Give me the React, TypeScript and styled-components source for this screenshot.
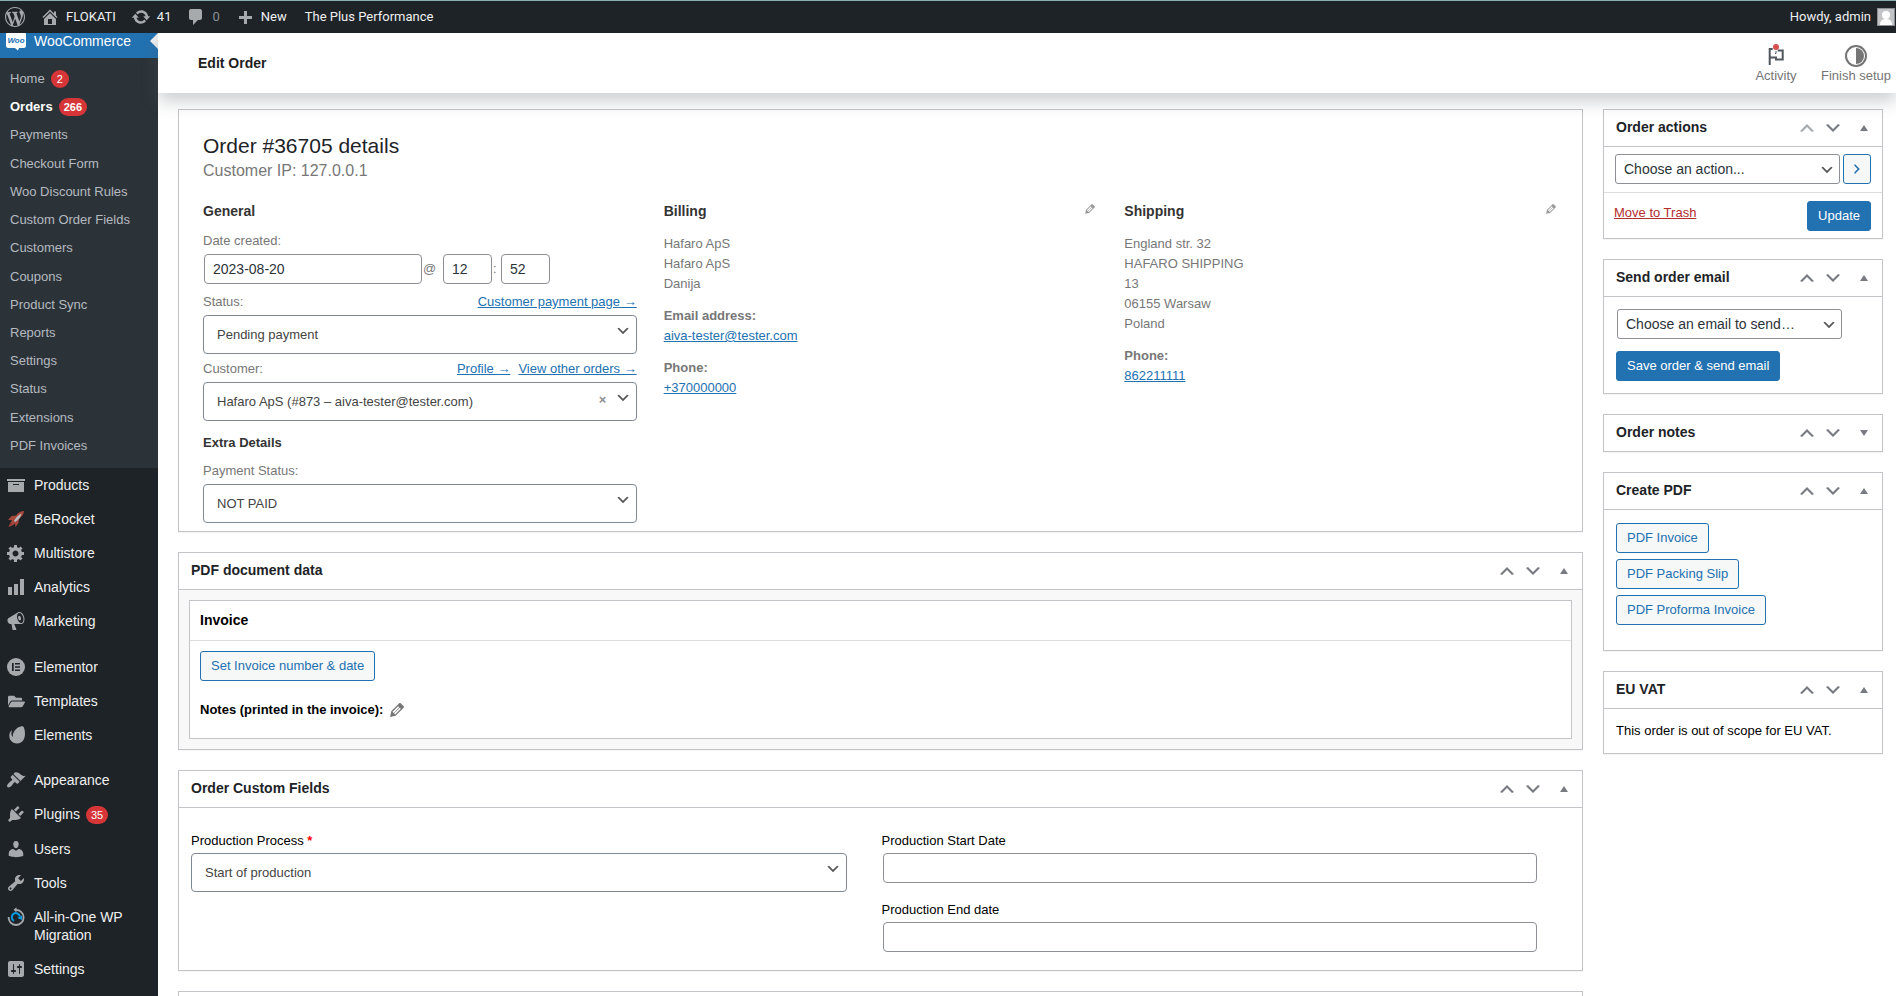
import React from 'react';
import styled, { createGlobalStyle, css } from 'styled-components';
import { FaFolderOpen } from 'react-icons/fa';

const GlobalStyle = createGlobalStyle`
  *, *::before, *::after { box-sizing: border-box; }
  html, body { margin: 0; padding: 0; }
  body {
    background: #fff;
    color: #3c434a;
    font-family: 'Liberation Sans', Arial, sans-serif;
    font-size: 13px;
    line-height: 20px;
  }
  h1, h2, h3, p, ul, address { margin: 0; padding: 0; font-style: normal; }
  ul { list-style: none; }
  button, input, select { font-family: inherit; }
`;

/* ---------- icons ---------- */

const ICONS = {
  wordpress:
    'M20 10c0-5.51-4.49-10-10-10C4.48 0 0 4.49 0 10c0 5.52 4.48 10 10 10 5.51 0 10-4.48 10-10zM7.78 15.37L4.37 6.22c.55-.02 1.17-.08 1.17-.08.5-.06.44-1.13-.06-1.11 0 0-1.45.11-2.37.11-.18 0-.37 0-.58-.01C4.12 2.69 6.87 1.11 10 1.11c2.33 0 4.45.87 6.05 2.34-.68-.11-1.65.39-1.65 1.58 0 .74.45 1.36.9 2.1.35.61.55 1.36.55 2.46 0 1.49-1.4 5-1.4 5l-3.03-8.37c.54-.02.82-.17.82-.17.5-.05.44-1.25-.06-1.22 0 0-1.44.12-2.38.12-.87 0-2.33-.12-2.33-.12-.5-.03-.56 1.2-.06 1.22l.92.08 1.26 3.41zM17.41 10c.24-.64.74-1.87.43-4.25.7 1.29 1.05 2.71 1.05 4.25 0 3.29-1.73 6.24-4.4 7.78.97-2.59 1.94-5.2 2.92-7.78zM6.1 18.09C3.12 16.65 1.11 13.53 1.11 10c0-1.3.23-2.48.72-3.59C3.25 10.3 4.67 14.2 6.1 18.09zm4.03-6.63l2.58 6.98c-.86.29-1.76.45-2.71.45-.79 0-1.57-.11-2.29-.33.81-2.38 1.62-4.74 2.42-7.1z',
  home: 'M16 8.5l1.53 1.53-1.06 1.06L10 4.6l-6.47 6.49-1.06-1.06L10 2.5l4 4v-2h2v4zm-6-2.46l6 5.99V18H4v-5.97zM12 17v-5H8v5h4z',
  update:
    'M10.2 3.28c3.53 0 6.43 2.61 6.92 6h2.08l-3.5 4-3.5-4h2.32c-.45-1.97-2.21-3.45-4.32-3.45-1.45 0-2.73.71-3.54 1.78L4.95 5.66C6.23 4.2 8.11 3.28 10.2 3.28zm-.4 13.44c-3.52 0-6.43-2.61-6.92-6H.8l3.5-4c1.17 1.33 2.33 2.67 3.5 4H5.48c.45 1.97 2.21 3.45 4.32 3.45 1.45 0 2.73-.71 3.54-1.78l1.71 1.95c-1.28 1.46-3.15 2.38-5.25 2.38z',
  comment: 'M5 2h9c1.1 0 2 .9 2 2v7c0 1.1-.9 2-2 2h-2l-5 5v-5H5c-1.1 0-2-.9-2-2V4c0-1.1.9-2 2-2z',
  plus: 'M17 9v3h-5v5H9v-5H4V9h5V4h3v5h5z',
  archive: 'M19 4v2H1V4h18zM2 7h16v10H2V7zm11 3V9H7v1h6z',
  gear: 'M18 12h-2.18c-.17.7-.44 1.35-.81 1.93l1.54 1.54-2.1 2.1-1.54-1.54c-.58.36-1.23.63-1.91.79V19H8v-2.18c-.68-.16-1.33-.43-1.91-.79l-1.54 1.54-2.12-2.12 1.54-1.54c-.36-.58-.63-1.23-.79-1.91H1V9.03h2.17c.16-.7.44-1.35.8-1.94L2.43 5.55l2.1-2.1 1.54 1.54c.58-.37 1.24-.64 1.93-.81V2h3v2.18c.68.16 1.33.43 1.91.79l1.54-1.54 2.12 2.12-1.54 1.54c.36.59.64 1.24.8 1.94H18V12zm-8.5 1.5c1.66 0 3-1.34 3-3s-1.34-3-3-3-3 1.34-3 3 1.34 3 3 3z',
  chart: 'M18 18V2h-4v16h4zm-6 0V7H8v11h4zm-6 0v-8H2v8h4z',
  megaphone:
    'M18.15 5.94c.46 1.62.38 3.22-.02 4.48-.42 1.28-1.26 2.18-2.3 2.48-.16.06-.26.06-.4.06-.06.02-.12.02-.18.02-.06.02-.14.02-.22.02h-6.8l2.22 5.5c.02.14-.06.26-.14.34-.08.1-.24.16-.34.16H6.95c-.1 0-.26-.06-.34-.16-.08-.08-.16-.2-.14-.34l-1-5.5H4.25l-.02-.02c-.5.06-1.08-.18-1.54-.62s-.88-1.08-1.06-1.88c-.24-.8-.2-1.56-.02-2.2.18-.62.58-1.08 1.06-1.3l.02-.02 9-5.4c.1-.06.18-.1.24-.16.06-.04.14-.08.24-.12.16-.08.28-.12.5-.18 1.04-.3 2.24.1 3.22.98s1.84 2.24 2.26 3.86zm-2.58 5.98h-.02c.4-.1.74-.34 1.04-.7.58-.7.86-1.76.86-3.04 0-.64-.1-1.3-.28-1.98-.34-1.36-1.02-2.5-1.78-3.24s-1.68-1.1-2.46-.88c-.82.22-1.4.96-1.7 2-.32 1.04-.28 2.36.06 3.72.38 1.36 1 2.5 1.8 3.24.78.74 1.62 1.1 2.48.88zm-2.54-7.08c.22-.04.42-.02.62.04.38.16.76.48 1.02 1s.42 1.2.42 1.78c0 .3-.04.56-.12.8-.18.48-.44.84-.86.94-.34.1-.8-.06-1.14-.4s-.64-.86-.78-1.5c-.18-.62-.12-1.24.02-1.72s.48-.84.82-.94z',
  appearance:
    'M14.48 11.06L7.41 3.99l1.5-1.5c.5-.56 2.3-.47 3.51.32 1.21.8 1.43 1.28 2.91 2.1 1.18.64 2.45 1.26 4.45.85zm-.71.71L6.7 4.7 4.93 6.47c-.39.39-.39 1.02 0 1.41l1.06 1.06c.39.39.39 1.03 0 1.42-.6.6-1.43 1.11-2.21 1.69-.35.26-.7.53-1.01.84C1.43 14.23.4 16.08 1.4 17.07c.99 1 2.84-.03 4.18-1.36.31-.31.58-.66.85-1.02.57-.78 1.08-1.61 1.69-2.21.39-.39 1.02-.39 1.41 0l1.06 1.06c.39.39 1.02.39 1.41 0z',
  plugins:
    'M13.11 4.36L9.87 7.6 8 5.73l3.24-3.24c.35-.34 1.05-.2 1.56.32.52.51.66 1.21.31 1.55zm-8 1.77l.91-1.12 9.01 9.01-1.19.84c-.71.71-2.63 1.16-3.82 1.16H6.14L4.9 17.26c-.59.59-1.54.59-2.12 0-.59-.58-.59-1.53 0-2.12l1.24-1.24v-3.88c0-1.13.4-3.19 1.09-3.89zm7.26 3.97l3.24-3.24c.34-.35 1.04-.21 1.55.31.52.51.66 1.21.31 1.55l-3.24 3.25z',
  users:
    'M10 9.25c-2.27 0-2.73-3.44-2.73-3.44C7 4.02 7.82 2 9.97 2c2.16 0 2.98 2.02 2.71 3.81 0 0-.41 3.44-2.68 3.44zm0 2.57L12.72 10c2.39 0 4.52 2.33 4.52 4.53v2.49s-3.65 1.13-7.24 1.13c-3.65 0-7.24-1.13-7.24-1.13v-2.49c0-2.25 1.94-4.48 4.47-4.48z',
  tools:
    'M16.68 9.77c-1.34 1.34-3.3 1.67-4.95.99l-5.41 6.52c-.99.99-2.59.99-3.58 0s-.99-2.59 0-3.57l6.52-5.42c-.68-1.65-.35-3.61.99-4.95 1.28-1.28 3.12-1.62 4.72-1.06l-2.89 2.89 2.82 2.82 2.86-2.87c.53 1.58.18 3.39-1.08 4.65zM3.81 16.21c.4.39 1.04.39 1.43 0 .4-.4.4-1.04 0-1.43-.39-.4-1.03-.4-1.43 0-.39.39-.39 1.03 0 1.43z',
  sliders:
    'M18 16V4c0-1.1-.9-2-2-2H4c-1.1 0-2 .9-2 2v12c0 1.1.9 2 2 2h12c1.1 0 2-.9 2-2zM8 11h1c.55 0 1 .45 1 1s-.45 1-1 1H8v1.5c0 .28-.22.5-.5.5s-.5-.22-.5-.5V13H6c-.55 0-1-.45-1-1s.45-1 1-1h1V5.5c0-.28.22-.5.5-.5s.5.22.5.5V11zm5-2h-1c-.55 0-1-.45-1-1s.45-1 1-1h1V5.5c0-.28.22-.5.5-.5s.5.22.5.5V7h1c.55 0 1 .45 1 1s-.45 1-1 1h-1v5.5c0 .28-.22.5-.5.5s-.5-.22-.5-.5V9z',
  up: 'M15 14l-5-5-5 5-2-1 7-7 7 7z',
  down: 'M5 6l5 5 5-5 2 1-7 7-7-7z',
  right: 'M6 15l5-5-5-5 1-2 7 7-7 7z',
  triangleUp: 'M6 13l4-6 4 6z',
  triangleDown: 'M6 7h8l-4 6z',
  pencil:
    'M13.89 3.39l2.71 2.72c.46.46.42 1.24.03 1.64l-8.01 8.02-5.56 1.16 1.16-5.58s7.6-7.63 7.99-8.03c.39-.39 1.22-.39 1.68.07zm-2.73 2.79l-5.59 5.61 1.11 1.11 5.54-5.65zm-2.97 8.23l5.58-5.6-1.07-1.08-5.59 5.6z',
};

type IconName = keyof typeof ICONS;

const Glyph = ({ name, size = 20 }: { name: IconName; size?: number }) => (
  <svg width={size} height={size} viewBox="0 0 20 20" fill="currentColor" aria-hidden="true">
    <path d={ICONS[name]} />
  </svg>
);

const RocketIcon = () => (
  <svg width="20" height="20" viewBox="0 0 20 20" aria-hidden="true">
    <path d="M18 2c-3 0-6 1.500-8 4.500L5.500 7 2 11l4 .2L4.500 14 3 18l4-2 2-1.500.5 3.500 3-4 .5-4c3-2.500 5-5 5-8z" fill="#a8473c" />
    <path d="M15.500 4.500c-3 1.200-6 4.500-7.500 7.500l1 1c3-1.500 6-5 6.500-8.500z" fill="#b9bcbf" />
    <path d="M2 18l2.500-4.500L6.500 15z" fill="#8d3a31" />
  </svg>
);

const ElementorIcon = () => (
  <svg width="20" height="20" viewBox="0 0 20 20" aria-hidden="true">
    <circle cx="10" cy="10" r="9" fill="#a7aaad" />
    <path d="M6 6h1.700v8H6zM9 6h5v1.600H9zM9 9.200h5v1.600H9zM9 12.400h5V14H9z" fill="#1d2327" />
  </svg>
);

const LeafIcon = () => (
  <svg width="20" height="20" viewBox="-3 -1 27 27" fill="#a7aaad" aria-hidden="true">
    <path d="M20.058 1.043C16.744-.841 6.018 4.682 6.104 14.38a.459.459 0 0 1-.45.451.463.463 0 0 1-.388-.221 10.387 10.387 0 0 1-.412-7.634.42.42 0 0 0-.712-.412 10.284 10.284 0 0 0-2.784 7.033A10.284 10.284 0 0 0 11.760 24c14.635-.332 11.257-21.247 8.298-22.957z" />
  </svg>
);

const MigrationIcon = () => (
  <svg width="20" height="20" viewBox="0 0 20 20" fill="none" aria-hidden="true">
    <path d="M9.500 3a7.500 7.500 0 1 1-6.900 7" stroke="#a7aaad" strokeWidth="1.800" />
    <path d="M10.500.2v5.400L7.500 2.800z" fill="#a7aaad" />
    <path d="M8 13.900A4.100 4.100 0 1 1 13.900 9.600" stroke="#0a9be0" strokeWidth="2" />
    <path d="M16 8.500v4.500l-4.800-2z" fill="#0a9be0" />
  </svg>
);

const WooIcon = () => (
  <svg width="20" height="20" viewBox="0 0 20 20" aria-hidden="true">
    <path d="M2.500 1h15A2.500 2.500 0 0 1 20 3.500v11a2.500 2.500 0 0 1-2.500 2.500H13l-1 2.500L9 17H2.500A2.500 2.500 0 0 1 0 14.500v-11A2.500 2.500 0 0 1 2.500 1z" fill="#fff" />
    <text x="10" y="12" textAnchor="middle" fontFamily="Liberation Sans, Arial, sans-serif" fontSize="8" fontWeight="700" fontStyle="italic" fill="#2271b1">
      Woo
    </text>
  </svg>
);

const FlagIcon = () => (
  <svg width="24" height="24" viewBox="0 0 24 24" fill="none" stroke="#50575e" strokeWidth="2" aria-hidden="true">
    <path d="M5.700 21V4" />
    <path d="M5.700 5h3M5.700 13.500h6.300v2h6.700V6.500h-5" />
    <path d="M12 7v2.500h-1" strokeWidth="1" />
    <circle cx="12" cy="3" r="3" fill="#d94f4f" stroke="none" />
  </svg>
);

const HalfCircleIcon = () => (
  <svg width="24" height="24" viewBox="0 0 24 24" aria-hidden="true">
    <circle cx="12" cy="12" r="10" fill="none" stroke="#757575" strokeWidth="2" />
    <path d="M12 4a8 8 0 0 1 0 16z" fill="#757575" />
  </svg>
);

const AvatarIcon = () => (
  <svg width="18" height="18" viewBox="0 0 18 18" aria-hidden="true">
    <rect width="18" height="18" fill="#8c8f94" />
    <rect x="1" y="1" width="16" height="16" fill="#c3c4c7" />
    <circle cx="9" cy="7" r="4" fill="#fff" />
    <path d="M3 17c0-4 2-6 6-6s6 2 6 6z" fill="#fff" />
  </svg>
);

/* ---------- shell ---------- */

const Shell = styled.div`
  display: flex;
  flex-direction: column;
  height: 100vh;
  overflow: hidden;
`;

const AdminBar = styled.header`
  position: relative;
  z-index: 3;
  flex: none;
  display: flex;
  align-items: center;
  height: 33px;
  padding: 0 1px 0 5px;
  border-top: 1px solid #86aeb0;
  background: #1d2327;
  font-family: Roboto, sans-serif;
`;

const BarLink = styled.a<{ $muted?: boolean; $end?: boolean; $plain?: boolean }>`
  display: flex;
  align-items: center;
  gap: 6px;
  margin-right: ${(p) => (p.$end ? '0' : '15px')};
  margin-left: ${(p) => (p.$end ? 'auto' : p.$plain ? '3px' : '0')};
  color: ${(p) => (p.$muted ? '#8c8f94' : '#f0f0f1')};
  text-decoration: none;
  white-space: nowrap;
  svg { color: #a7aaad; }
`;

const Columns = styled.div`
  flex: 1;
  display: flex;
  min-height: 0;
`;

const Sidebar = styled.nav`
  flex: none;
  width: 158px;
  overflow: hidden;
  background: #1d2327;
`;

const MenuList = styled.ul`
  margin-top: -9px;
`;

const MenuItem = styled.li<{ $space?: number }>`
  margin-top: ${(p) => p.$space ?? 0}px;
`;

const MenuLink = styled.a<{ $active?: boolean }>`
  position: relative;
  display: flex;
  align-items: flex-start;
  gap: 8px;
  padding: 8px 8px 8px 6px;
  color: ${(p) => (p.$active ? '#fff' : '#f0f0f1')};
  background: ${(p) => (p.$active ? '#2271b1' : 'transparent')};
  font-size: 14px;
  line-height: 18px;
  text-decoration: none;
  ${(p) =>
    p.$active &&
    css`
      &::after {
        content: '';
        position: absolute;
        right: 0;
        top: 9px;
        border: 8px solid transparent;
        border-right-color: #f0f0f1;
        border-left: 0;
      }
    `}
`;

const MenuIcon = styled.span`
  flex: none;
  display: flex;
  align-items: center;
  justify-content: center;
  width: 20px;
  height: 18px;
  color: #a7aaad;
  svg { flex: none; }
`;

const Submenu = styled.ul`
  display: flex;
  flex-direction: column;
  justify-content: space-between;
  min-height: 410px;
  padding: 7px 0 8px;
  background: #2c3338;
`;

const SubLink = styled.a<{ $current?: boolean }>`
  display: flex;
  align-items: center;
  height: 28px;
  padding: 0 10px;
  color: ${(p) => (p.$current ? '#fff' : '#b5bac0')};
  font-weight: ${(p) => (p.$current ? 700 : 400)};
  text-decoration: none;
`;

const Badge = styled.span`
  display: inline-block;
  min-width: 18px;
  height: 18px;
  margin-left: 6px;
  padding: 0 5px;
  border-radius: 9px;
  background: #d63638;
  color: #fff;
  font-size: 11px;
  line-height: 18px;
  text-align: center;
`;

const Page = styled.div`
  flex: 1;
  display: flex;
  flex-direction: column;
  min-width: 0;
`;

const PageHeader = styled.div`
  position: relative;
  z-index: 2;
  flex: none;
  display: flex;
  align-items: center;
  justify-content: space-between;
  height: 60px;
  padding-left: 40px;
  background: #fff;
  box-shadow: 0 8px 16px 0 rgba(85, 93, 102, 0.3);
`;

const PageTitle = styled.h1`
  color: #1e1e1e;
  font-size: 14px;
  line-height: 20px;
`;

const HeaderActions = styled.div`
  display: flex;
`;

const HeaderButton = styled.button`
  display: flex;
  flex-direction: column;
  align-items: center;
  width: 80px;
  height: 60px;
  padding: 11px 0 0;
  border: 0;
  background: none;
  color: #757575;
  font-size: 13px;
  line-height: 16px;
  white-space: nowrap;
`;

const Workspace = styled.main`
  flex: 1;
  display: flex;
  align-items: flex-start;
  gap: 20px;
  min-height: 0;
  padding: 16px 13px 0 20px;
  overflow: auto;
  scrollbar-width: none;
`;

const MainColumn = styled.div`
  flex: 1;
  display: flex;
  flex-direction: column;
  gap: 20px;
  min-width: 0;
`;

const SideColumn = styled.aside`
  flex: none;
  display: flex;
  flex-direction: column;
  gap: 20px;
  width: 280px;
`;

/* ---------- panels ---------- */

const Panel = styled.section`
  border: 1px solid #c3c4c7;
  background: #fff;
  box-shadow: 0 1px 1px rgba(0, 0, 0, 0.04);
`;

const PanelHead = styled.div<{ $closed?: boolean }>`
  display: flex;
  align-items: center;
  height: ${(p) => (p.$closed ? '36px' : '37px')};
  border-bottom: ${(p) => (p.$closed ? '0' : '1px solid #c3c4c7')};
`;

const PanelTitle = styled.h2`
  flex: 1;
  padding: 0 0 2px 12px;
  color: #1d2327;
  font-size: 14px;
  line-height: 20px;
`;

const HeadButton = styled.button<{ $wide?: boolean; $faded?: boolean }>`
  display: flex;
  align-items: center;
  justify-content: center;
  width: ${(p) => (p.$wide ? '36px' : '26px')};
  height: 36px;
  padding: 0;
  border: 0;
  background: none;
  color: ${(p) => (p.$faded ? '#a7aaad' : '#787c82')};
`;

const PanelBody = styled.div<{ $pad: string; $gray?: boolean }>`
  padding: ${(p) => p.$pad};
  background: ${(p) => (p.$gray ? '#f8f8f8' : '#fff')};
`;

const PostBox = ({
  title,
  closed,
  first,
  children,
}: {
  title: string;
  closed?: boolean;
  first?: boolean;
  children?: React.ReactNode;
}) => (
  <Panel>
    <PanelHead $closed={closed}>
      <PanelTitle>{title}</PanelTitle>
      <HeadButton type="button" aria-label={`Move ${title} up`} $faded={first}>
        <Glyph name="up" />
      </HeadButton>
      <HeadButton type="button" aria-label={`Move ${title} down`}>
        <Glyph name="down" />
      </HeadButton>
      <HeadButton type="button" aria-label={`Toggle ${title}`} $wide>
        <Glyph name={closed ? 'triangleDown' : 'triangleUp'} />
      </HeadButton>
    </PanelHead>
    {children}
  </Panel>
);

/* ---------- controls ---------- */

const Link = styled.a<{ $danger?: boolean }>`
  color: ${(p) => (p.$danger ? '#b32d2e' : '#2271b1')};
`;

const Button = styled.button<{ $primary?: boolean; $narrow?: boolean }>`
  display: inline-flex;
  align-items: center;
  justify-content: center;
  height: 30px;
  width: ${(p) => (p.$narrow ? '28px' : 'auto')};
  padding: ${(p) => (p.$narrow ? '0' : '0 10px 2px')};
  border: 1px solid #2271b1;
  border-radius: 3px;
  background: ${(p) => (p.$primary ? '#2271b1' : '#f6f7f7')};
  color: ${(p) => (p.$primary ? '#fff' : '#2271b1')};
  font-size: 13px;
  white-space: nowrap;
`;

const TextInput = styled.input<{ $width?: string }>`
  display: block;
  width: ${(p) => p.$width ?? '100%'};
  height: 30px;
  padding: 0 8px;
  border: 1px solid #8c8f94;
  border-radius: 4px;
  background: #fff;
  color: #2c3338;
  font-size: 14px;
`;

const SelectWrap = styled.div<{ $compact?: boolean }>`
  position: relative;
  width: ${(p) => (p.$compact ? '225px' : '100%')};
  color: #555;
  & > svg {
    position: absolute;
    right: ${(p) => (p.$compact ? '5px' : '6px')};
    top: 8px;
    pointer-events: none;
  }
`;

const SelectBox = styled.select<{ $compact?: boolean }>`
  appearance: none;
  display: block;
  width: 100%;
  height: ${(p) => (p.$compact ? '30px' : '39px')};
  padding: ${(p) => (p.$compact ? '0 24px 0 8px' : '0 50px 0 13px')};
  border: 1px solid ${(p) => (p.$compact ? '#8c8f94' : '#7e8993')};
  border-radius: ${(p) => (p.$compact ? '3px' : '4px')};
  background: #fff;
  color: ${(p) => (p.$compact ? '#2c3338' : '#444')};
  font-size: ${(p) => (p.$compact ? '14px' : '13px')};
`;

const ClearButton = styled.button`
  position: absolute;
  right: 26px;
  top: 8px;
  width: 16px;
  height: 20px;
  padding: 0;
  border: 0;
  background: none;
  color: #8c8f94;
  font-size: 13px;
  font-weight: 700;
  line-height: 20px;
`;

const Select = ({
  id,
  value,
  compact,
  label,
  clearable,
}: {
  id?: string;
  value: string;
  compact?: boolean;
  label?: string;
  clearable?: boolean;
}) => (
  <SelectWrap $compact={compact}>
    <SelectBox id={id} aria-label={label} $compact={compact}>
      <option>{value}</option>
    </SelectBox>
    {clearable && (
      <ClearButton type="button" aria-label="Remove customer">
        ×
      </ClearButton>
    )}
    <Glyph name="down" size={16} />
  </SelectWrap>
);

/* ---------- order details ---------- */

const Details = styled(Panel)`
  padding: 22px 24px 8px;
`;

const OrderTitle = styled.h2`
  color: #1d2327;
  font-size: 21px;
  font-weight: 400;
  line-height: 28px;
`;

const OrderMeta = styled.p`
  padding-top: 1px;
  color: #777;
  font-size: 16px;
  line-height: 20px;
`;

const DetailColumns = styled.div`
  display: grid;
  grid-template-columns: repeat(3, 1fr);
  gap: 27px;
  margin-top: 20px;
`;

const ColumnHead = styled.div`
  display: flex;
  justify-content: space-between;
  h3 {
    color: #333;
    font-size: 14px;
    line-height: 20px;
  }
`;

const EditLink = styled.button<{ $large?: boolean }>`
  display: flex;
  padding: ${(p) => (p.$large ? '0' : '0 0 4px')};
  border: 0;
  background: none;
  align-items: center;
  color: ${(p) => (p.$large ? '#777' : '#999')};
`;

const Field = styled.div<{ $top: number }>`
  margin-top: ${(p) => p.$top}px;
`;

const FieldHead = styled.div`
  display: flex;
  gap: 8px;
  margin-bottom: 3px;
  color: #777;
  label { margin-right: auto; }
`;

const SubHeading = styled.h3`
  margin-top: 12px;
  color: #333;
  font-size: 13px;
  line-height: 20px;
`;

const DateRow = styled.div`
  display: flex;
  align-items: center;
  padding-left: 1px;
  color: #777;
`;

const Separator = styled.span<{ $width: number }>`
  width: ${(p) => p.$width}px;
  padding-left: 1px;
`;

const Address = styled.address`
  display: flex;
  flex-direction: column;
  gap: 12px;
  margin-top: 13px;
  color: #777;
`;

/* ---------- invoice and custom fields ---------- */

const InvoiceCard = styled.div`
  border: 1px solid #c3c4c7;
  background: #fff;
`;

const InvoiceTitle = styled.h3`
  padding: 9px 10px 10px;
  border-bottom: 1px solid #ddd;
  color: #000;
  font-size: 14px;
  line-height: 20px;
`;

const InvoiceBody = styled.div`
  padding: 10px 10px 18px;
`;

const NotesLine = styled.div`
  display: flex;
  align-items: center;
  gap: 4px;
  margin-top: 19px;
  color: #000;
  font-weight: 700;
`;

const FieldGrid = styled.div`
  display: grid;
  grid-template-columns: 1fr 1fr;
  gap: 35px;
`;

const FieldStack = styled.div`
  display: flex;
  flex-direction: column;
  gap: 17px;
  color: #000;
  label {
    display: block;
    margin-bottom: 2px;
  }
`;

const Required = styled.span`
  color: #f00;
  font-weight: 700;
`;

const Inset = styled.div`
  padding-left: 1px;
`;

const ActionRow = styled.div`
  display: flex;
  gap: 3px;
  padding: 7px 11px 8px;
  border-bottom: 1px solid #ddd;
`;

const PublishRow = styled.div`
  display: flex;
  align-items: flex-start;
  justify-content: space-between;
  padding: 8px 11px 7px 10px;
  line-height: 24px;
`;

const ButtonStack = styled.div<{ $gap: number }>`
  display: flex;
  flex-direction: column;
  align-items: flex-start;
  gap: ${(p) => p.$gap}px;
`;

const ScopeNote = styled.p`
  color: #000;
`;

const NextPanel = styled(Panel)`
  min-height: 38px;
`;

/* ---------- data ---------- */

const SUBMENU: { label: string; badge?: string; current?: boolean }[] = [
  { label: 'Home', badge: '2' },
  { label: 'Orders', badge: '266', current: true },
  { label: 'Payments' },
  { label: 'Checkout Form' },
  { label: 'Woo Discount Rules' },
  { label: 'Custom Order Fields' },
  { label: 'Customers' },
  { label: 'Coupons' },
  { label: 'Product Sync' },
  { label: 'Reports' },
  { label: 'Settings' },
  { label: 'Status' },
  { label: 'Extensions' },
  { label: 'PDF Invoices' },
];

const MENU: { label: string; icon: React.ReactNode; badge?: string; space?: number }[] = [
  { label: 'Products', icon: <Glyph name="archive" /> },
  { label: 'BeRocket', icon: <RocketIcon /> },
  { label: 'Multistore', icon: <Glyph name="gear" /> },
  { label: 'Analytics', icon: <Glyph name="chart" /> },
  { label: 'Marketing', icon: <Glyph name="megaphone" /> },
  { label: 'Elementor', icon: <ElementorIcon />, space: 12 },
  { label: 'Templates', icon: <FaFolderOpen size={17} /> },
  { label: 'Elements', icon: <LeafIcon /> },
  { label: 'Appearance', icon: <Glyph name="appearance" />, space: 11 },
  { label: 'Plugins', icon: <Glyph name="plugins" />, badge: '35' },
  { label: 'Users', icon: <Glyph name="users" /> },
  { label: 'Tools', icon: <Glyph name="tools" /> },
  { label: 'All-in-One WP Migration', icon: <MigrationIcon /> },
  { label: 'Settings', icon: <Glyph name="sliders" /> },
];

export default function App() {
  return (
    <Shell>
      <GlobalStyle />
      <AdminBar>
        <BarLink href="#" aria-label="About WordPress">
          <Glyph name="wordpress" />
        </BarLink>
        <BarLink href="#">
          <Glyph name="home" />
          FLOKATI
        </BarLink>
        <BarLink href="#">
          <Glyph name="update" />
          41
        </BarLink>
        <BarLink href="#" $muted>
          <Glyph name="comment" />0
        </BarLink>
        <BarLink href="#">
          <Glyph name="plus" />
          New
        </BarLink>
        <BarLink href="#" $plain>
          The Plus Performance
        </BarLink>
        <BarLink href="#" $end>
          Howdy, admin
          <AvatarIcon />
        </BarLink>
      </AdminBar>

      <Columns>
        <Sidebar aria-label="Main menu">
          <MenuList>
            <MenuItem>
              <MenuLink href="#" $active>
                <MenuIcon>
                  <WooIcon />
                </MenuIcon>
                WooCommerce
              </MenuLink>
              <Submenu>
                {SUBMENU.map((item) => (
                  <li key={item.label}>
                    <SubLink href="#" $current={item.current}>
                      {item.label}
                      {item.badge && <Badge>{item.badge}</Badge>}
                    </SubLink>
                  </li>
                ))}
              </Submenu>
            </MenuItem>
            {MENU.map((item) => (
              <MenuItem key={item.label} $space={item.space}>
                <MenuLink href="#">
                  <MenuIcon>{item.icon}</MenuIcon>
                  <span>
                    {item.label}
                    {item.badge && <Badge>{item.badge}</Badge>}
                  </span>
                </MenuLink>
              </MenuItem>
            ))}
          </MenuList>
        </Sidebar>

        <Page>
          <PageHeader>
            <PageTitle>Edit Order</PageTitle>
            <HeaderActions>
              <HeaderButton type="button">
                <FlagIcon />
                Activity
              </HeaderButton>
              <HeaderButton type="button">
                <HalfCircleIcon />
                Finish setup
              </HeaderButton>
            </HeaderActions>
          </PageHeader>

          <Workspace>
            <MainColumn>
              <Details>
                <OrderTitle>Order #36705 details</OrderTitle>
                <OrderMeta>Customer IP: 127.0.0.1</OrderMeta>
                <DetailColumns>
                  <div>
                    <ColumnHead>
                      <h3>General</h3>
                    </ColumnHead>
                    <Field $top={10}>
                      <FieldHead>
                        <label htmlFor="order-date">Date created:</label>
                      </FieldHead>
                      <DateRow>
                        <TextInput id="order-date" $width="218px" defaultValue="2023-08-20" />
                        <Separator $width={21}>@</Separator>
                        <TextInput aria-label="Hour" $width="49px" defaultValue="12" />
                        <Separator $width={9}>:</Separator>
                        <TextInput aria-label="Minute" $width="49px" defaultValue="52" />
                      </DateRow>
                    </Field>
                    <Field $top={8}>
                      <FieldHead>
                        <label htmlFor="order-status">Status:</label>
                        <Link href="#">Customer payment page →</Link>
                      </FieldHead>
                      <Select id="order-status" value="Pending payment" />
                    </Field>
                    <Field $top={5}>
                      <FieldHead>
                        <label htmlFor="order-customer">Customer:</label>
                        <Link href="#">Profile →</Link>
                        <Link href="#">View other orders →</Link>
                      </FieldHead>
                      <Select id="order-customer" value="Hafaro ApS (#873 – aiva-tester@tester.com)" clearable />
                    </Field>
                    <SubHeading>Extra Details</SubHeading>
                    <Field $top={8}>
                      <FieldHead>
                        <label htmlFor="payment-status">Payment Status:</label>
                      </FieldHead>
                      <Select id="payment-status" value="NOT PAID" />
                    </Field>
                  </div>

                  <div>
                    <ColumnHead>
                      <h3>Billing</h3>
                      <EditLink type="button" aria-label="Edit billing">
                        <Glyph name="pencil" size={14} />
                      </EditLink>
                    </ColumnHead>
                    <Address>
                      <p>
                        Hafaro ApS
                        <br />
                        Hafaro ApS
                        <br />
                        Danija
                      </p>
                      <p>
                        <strong>Email address:</strong>
                        <br />
                        <Link href="#">aiva-tester@tester.com</Link>
                      </p>
                      <p>
                        <strong>Phone:</strong>
                        <br />
                        <Link href="#">+370000000</Link>
                      </p>
                    </Address>
                  </div>

                  <div>
                    <ColumnHead>
                      <h3>Shipping</h3>
                      <EditLink type="button" aria-label="Edit shipping">
                        <Glyph name="pencil" size={14} />
                      </EditLink>
                    </ColumnHead>
                    <Address>
                      <p>
                        England str. 32
                        <br />
                        HAFARO SHIPPING
                        <br />
                        13
                        <br />
                        06155 Warsaw
                        <br />
                        Poland
                      </p>
                      <p>
                        <strong>Phone:</strong>
                        <br />
                        <Link href="#">862211111</Link>
                      </p>
                    </Address>
                  </div>
                </DetailColumns>
              </Details>

              <PostBox title="PDF document data">
                <PanelBody $pad="10px" $gray>
                  <InvoiceCard>
                    <InvoiceTitle>Invoice</InvoiceTitle>
                    <InvoiceBody>
                      <Button type="button">Set Invoice number &amp; date</Button>
                      <NotesLine>
                        Notes (printed in the invoice):
                        <EditLink type="button" aria-label="Edit notes" $large>
                          <Glyph name="pencil" />
                        </EditLink>
                      </NotesLine>
                    </InvoiceBody>
                  </InvoiceCard>
                </PanelBody>
              </PostBox>

              <PostBox title="Order Custom Fields">
                <PanelBody $pad="23px 45px 18px 12px">
                  <FieldGrid>
                    <FieldStack>
                      <div>
                        <label htmlFor="production-process">
                          Production Process <Required>*</Required>
                        </label>
                        <Select id="production-process" value="Start of production" />
                      </div>
                    </FieldStack>
                    <FieldStack>
                      <div>
                        <label htmlFor="production-start">Production Start Date</label>
                        <Inset>
                          <TextInput id="production-start" />
                        </Inset>
                      </div>
                      <div>
                        <label htmlFor="production-end">Production End date</label>
                        <Inset>
                          <TextInput id="production-end" />
                        </Inset>
                      </div>
                    </FieldStack>
                  </FieldGrid>
                </PanelBody>
              </PostBox>

              <NextPanel />
            </MainColumn>

            <SideColumn>
              <PostBox title="Order actions" first>
                <ActionRow>
                  <Select label="Order action" value="Choose an action..." compact />
                  <Button type="button" aria-label="Apply" $narrow>
                    <Glyph name="right" size={14} />
                  </Button>
                </ActionRow>
                <PublishRow>
                  <Link href="#" $danger>
                    Move to Trash
                  </Link>
                  <Button type="button" $primary>
                    Update
                  </Button>
                </PublishRow>
              </PostBox>

              <PostBox title="Send order email">
                <PanelBody $pad="12px">
                  <ButtonStack $gap={12}>
                    <Inset>
                      <Select label="Email to send" value="Choose an email to send…" compact />
                    </Inset>
                    <Button type="button" $primary>
                      Save order &amp; send email
                    </Button>
                  </ButtonStack>
                </PanelBody>
              </PostBox>

              <PostBox title="Order notes" closed />

              <PostBox title="Create PDF">
                <PanelBody $pad="13px 12px 25px">
                  <ButtonStack $gap={6}>
                    <Button type="button">PDF Invoice</Button>
                    <Button type="button">PDF Packing Slip</Button>
                    <Button type="button">PDF Proforma Invoice</Button>
                  </ButtonStack>
                </PanelBody>
              </PostBox>

              <PostBox title="EU VAT">
                <PanelBody $pad="12px">
                  <ScopeNote>This order is out of scope for EU VAT.</ScopeNote>
                </PanelBody>
              </PostBox>
            </SideColumn>
          </Workspace>
        </Page>
      </Columns>
    </Shell>
  );
}
